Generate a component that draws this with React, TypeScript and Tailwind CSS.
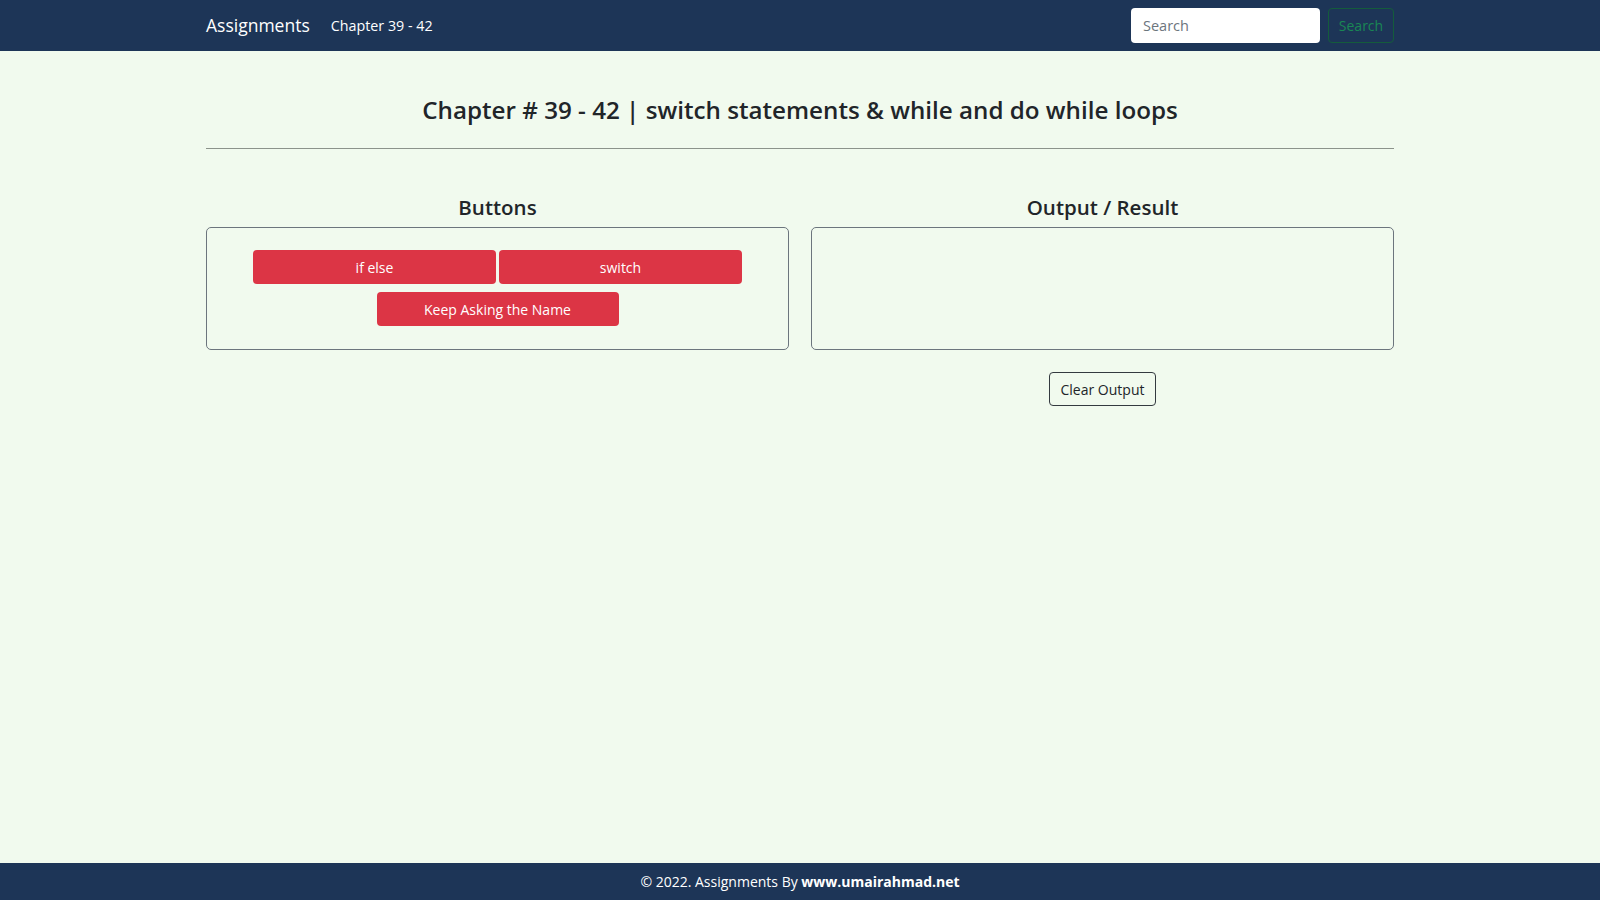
export default function App() {
  const font = { fontFamily: '"Open Sans", "Noto Sans", sans-serif' };

  return (
    <div
      className="min-h-screen flex flex-col bg-[#f1faee] text-[#212529]"
      style={font}
    >
      {/* Navbar */}
      <nav className="h-[51px] bg-[#1d3557] shrink-0">
        <div className="w-[1188px] mx-auto h-full flex items-center justify-between">
          <div className="flex items-center">
            <span className="text-white text-[17.5px]">Assignments</span>
            <span className="text-white text-[14.3px] ml-[21px]">Chapter 39 - 42</span>
          </div>
          <div className="flex items-center gap-2">
            <input
              type="text"
              placeholder="Search"
              className="w-[189px] h-[35px] bg-white rounded-[4px] px-3 text-[14.5px] text-[#212529] placeholder:text-[#6c757d] outline-none"
            />
            <button className="w-[66px] h-[35px] rounded-[4px] border border-[#145c3c] text-[#198754] text-[14px]">
              Search
            </button>
          </div>
        </div>
      </nav>

      {/* Main */}
      <main className="flex-1">
        <div className="w-[1188px] mx-auto">
          <h1 className="pt-[44px] text-center text-[24.2px] leading-[29px] font-semibold">
            Chapter # 39 - 42 | switch statements &amp; while and do while loops
          </h1>
          <hr className="mt-[24px] border-t border-[#8c938b]" />

          <div className="grid grid-cols-2 gap-[22px] mt-[46px]">
            {/* Buttons */}
            <div>
              <h4 className="text-center text-[20.5px] leading-[25px] font-semibold mb-[7px]">
                Buttons
              </h4>
              <div className="border border-[#6c757d] rounded-[5px] pt-[22px] pb-[23px] flex flex-col items-center gap-2">
                <div className="flex gap-[3px]">
                  <button className="w-[243px] h-[34px] rounded-[4px] bg-[#dc3545] text-white text-[14px]">
                    if else
                  </button>
                  <button className="w-[243px] h-[34px] rounded-[4px] bg-[#dc3545] text-white text-[14px]">
                    switch
                  </button>
                </div>
                <button className="w-[242px] h-[34px] rounded-[4px] bg-[#dc3545] text-white text-[14px]">
                  Keep Asking the Name
                </button>
              </div>
            </div>

            {/* Output */}
            <div className="flex flex-col items-center">
              <h4 className="text-center text-[20.5px] leading-[25px] font-semibold mb-[7px]">
                Output / Result
              </h4>
              <div className="w-full h-[123px] border border-[#6c757d] rounded-[5px]"></div>
              <button className="mt-[22px] w-[107px] h-[34px] rounded-[4px] border border-[#343a40] text-[14px]">
                Clear Output
              </button>
            </div>
          </div>
        </div>
      </main>

      {/* Footer */}
      <footer className="h-[37px] bg-[#1d3557] shrink-0 flex items-center justify-center text-white text-[14px]">
        © 2022. Assignments By&nbsp;<span className="font-bold">www.umairahmad.net</span>
      </footer>
    </div>
  );
}
